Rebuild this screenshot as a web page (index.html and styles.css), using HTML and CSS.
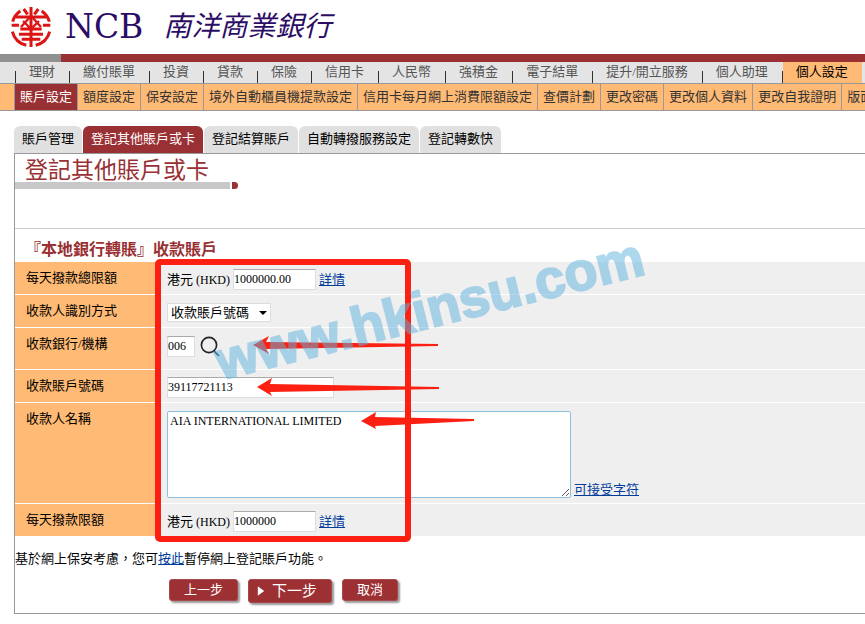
FILE: index.html
```html
<!DOCTYPE html>
<html lang="zh-Hant">
<head>
  <meta charset="UTF-8">
  <title>登記其他賬戶或卡</title>
  <link rel="stylesheet" href="styles.css">
</head>
<body>
  <header class="header">
    <svg class="logo" viewBox="0 0 120 120" fill="none" stroke="#dc1414" stroke-width="9">
      <path d="M60 0V120"/>
      <path d="M38 6L50 22M82 6L70 22"/>
      <path d="M28 12A57 57 0 0 0 5 44M92 12A57 57 0 0 1 115 44"/>
      <path d="M14 30H106"/>
      <path d="M2 55H24M96 55H118"/>
      <path d="M55 32L30 60M65 32L90 60M36 42L56 62M84 42L64 62" stroke-width="7"/>
      <path d="M28 66H92M24 82H96M32 97H88"/>
      <path d="M4 74A57 57 0 0 0 46 115M116 74A57 57 0 0 1 74 115"/>
    </svg>
    <span class="brand">NCB</span>
    <span class="brand-zh">南洋商業銀行</span>
  </header>
  <div class="stripe"></div>

  <nav class="menu">
    <a href="#">理財</a>
    <a href="#">繳付賬單</a>
    <a href="#">投資</a>
    <a href="#">貸款</a>
    <a href="#">保險</a>
    <a href="#">信用卡</a>
    <a href="#">人民幣</a>
    <a href="#">強積金</a>
    <a href="#">電子結單</a>
    <a href="#">提升/開立服務</a>
    <a href="#">個人助理</a>
    <a href="#" class="active">個人設定</a>
  </nav>

  <nav class="submenu">
    <a href="#" class="active">賬戶設定</a>
    <a href="#">額度設定</a>
    <a href="#">保安設定</a>
    <a href="#">境外自動櫃員機提款設定</a>
    <a href="#">信用卡每月網上消費限額設定</a>
    <a href="#">查價計劃</a>
    <a href="#">更改密碼</a>
    <a href="#">更改個人資料</a>
    <a href="#">更改自我證明</a>
    <a href="#">版面設定</a>
  </nav>

  <nav class="tabs">
    <a href="#">賬戶管理</a>
    <a href="#" class="active">登記其他賬戶或卡</a>
    <a href="#">登記結算賬戶</a>
    <a href="#">自動轉撥服務設定</a>
    <a href="#">登記轉數快</a>
  </nav>

  <main class="panel">
    <div class="title">
      <h1>登記其他賬戶或卡</h1>
      <div class="title-line"><span class="bar"></span><span class="dot"></span></div>
    </div>

    <h2>『本地銀行轉賬』收款賬戶</h2>

    <form>
      <div class="fields">
        <div class="row">
          <label for="total">每天撥款總限額</label>
          <div class="field">港元 <span class="latin">(HKD)</span> <input id="total" class="amount" value="1000000.00"> <a href="#">詳情</a></div>
        </div>
        <div class="row">
          <label for="method">收款人識別方式</label>
          <div class="field">
            <div class="select">
              <select id="method"><option>收款賬戶號碼</option></select>
              <svg viewBox="0 0 8 4"><path d="M0 0H8L4 4Z"/></svg>
            </div>
          </div>
        </div>
        <div class="row tall">
          <label for="bank">收款銀行/機構</label>
          <div class="field">
            <input id="bank" class="code" value="006">
            <button type="button" class="search" aria-label="搜尋">
              <svg viewBox="0 0 20 20" fill="none" stroke="#222" stroke-width="1.6"><circle cx="9" cy="9" r="7.6"/><path d="M14 15l5 5"/></svg>
            </button>
          </div>
        </div>
        <div class="row">
          <label for="account">收款賬戶號碼</label>
          <div class="field"><input id="account" class="account" value="39117721113"></div>
        </div>
        <div class="row">
          <label for="payee">收款人名稱</label>
          <div class="field bottom">
            <textarea id="payee">AIA INTERNATIONAL LIMITED</textarea>
            <a href="#">可接受字符</a>
          </div>
        </div>
        <div class="row">
          <label for="limit">每天撥款限額</label>
          <div class="field">港元 <span class="latin">(HKD)</span> <input id="limit" class="amount" value="1000000"> <a href="#">詳情</a></div>
        </div>

        <svg class="marks" viewBox="0 0 650 310">
          <g fill="#fb2012">
            <path d="M238 107L254 98L251 104L423 106V108L251 111L254 116Z"/>
            <path d="M242 149L257 140L255 146L424 149V151L255 154L257 158Z"/>
            <path d="M346 183L361 174L360 179L459 181V183L360 188L361 191Z"/>
          </g>
          <rect x="143" y="24" width="250" height="277" rx="2" fill="none" stroke="#fb2012" stroke-width="6"/>
          <text class="watermark" x="206" y="142" transform="rotate(-14 206 142)">www.hkinsu.com</text>
        </svg>
      </div>

      <p class="note">基於網上保安考慮，您可<a href="#">按此</a>暫停網上登記賬戶功能。</p>

      <div class="buttons">
        <button type="button">上一步</button>
        <button type="submit" class="next"><svg viewBox="0 0 10 12"><path d="M1 0L9 6L1 12Z" fill="#fff"/></svg>下一步</button>
        <button type="button">取消</button>
      </div>
    </form>
  </main>
</body>
</html>
```

FILE: styles.css
```css
* { box-sizing: border-box; }
body { margin: 0; font-family: "Liberation Serif", "Noto Sans CJK TC", serif; font-size: 13px; line-height: 16px; color: #000; background: #fff; }
a { color: #003c9c; }
nav { display: flex; white-space: nowrap; overflow: hidden; }
nav a { flex: none; text-decoration: none; }

.header { display: flex; align-items: center; height: 54px; padding-left: 11px; color: #2b0d66; }
.logo { width: 40px; height: 40px; margin-right: 14px; overflow: visible; }
.brand { font-family: "DejaVu Serif", serif; font-size: 33px; line-height: 40px; margin-right: 20px; }
.brand-zh { font-size: 28px; line-height: 40px; font-style: italic; }
.stripe { height: 8px; background: linear-gradient(to right, #909090 61px, #993033 61px); }

.menu { height: 22px; padding-left: 15px; background: #e4e4e4; border-bottom: 1px solid #999; }
.menu a { position: relative; padding: 2px 14px 3px 13px; color: #555; border-left: 1px solid transparent; background-clip: padding-box; }
.menu a::before { content: ""; position: absolute; left: -1px; bottom: 0; width: 1px; height: 12px; background: #333; }
.menu a:not(:first-child) { padding-left: 13px; }
.menu a.active { background-color: #ffba75; color: #000; }

.submenu { height: 27px; padding-left: 14px; background: #ffba75; border-bottom: 1px solid #999; }
.submenu a { padding: 5px; color: #333; border-left: 1px solid #999; }
.submenu a.active { background: #993033; color: #fff; }

.tabs { gap: 1px; margin-top: 15px; padding-left: 14px; }
.tabs a { padding: 5px 8px 6px; color: #000; background: #e0e0e0; border-radius: 6px 6px 0 0; }
.tabs a.active { background: #993033; color: #fff; }

.panel { margin-left: 14px; padding-bottom: 10px; border: 1px solid #999; border-right: none; }
.title { height: 75px; border-bottom: 1px solid #ccc; }
h1 { margin: 0; padding: 6px 0 0 10px; font-size: 23px; line-height: 22px; font-weight: normal; color: #993033; }
.title-line { display: flex; gap: 2px; }
.bar { width: 215px; height: 7px; background: #c8c8c8; }
.dot { width: 6px; height: 7px; background: #993033; border-radius: 0 4px 4px 0; }
h2 { margin: 0; padding: 11px 0 2px 10px; font-size: 16px; line-height: 20px; color: #993033; }

.fields { position: relative; }
.row { display: grid; grid-template-columns: 143px 1fr; min-height: 33px; border-bottom: 1px solid #fff; }
.row.tall { min-height: 42px; }
.row label { padding: 8px 11px; background: #ffba75; }
.field { display: flex; align-items: center; gap: 3px; padding: 6px 0 3px 9px; background: #efefef; }
.tall .field { align-items: flex-start; padding-top: 8px; }
.field.bottom { align-items: flex-end; padding: 8px 0 5px 9px; }
.latin { font-size: 12px; }
input, textarea, select { font-family: inherit; color: #000; background: #fff; border: 1px solid #ddd; }
input, textarea { font-size: 12px; }
input { height: 21px; padding: 1px 0; border-top-color: #aaa; }
.select { display: grid; align-items: center; }
select { grid-area: 1 / 1; appearance: none; width: 104px; height: 19px; padding: 0 3px; font-size: 13px; }
.select svg { grid-area: 1 / 1; justify-self: end; width: 8px; height: 4px; margin-right: 4px; pointer-events: none; }
textarea { width: 404px; height: 87px; padding: 2px; border-color: #8fbfdc; border-radius: 2px; margin: 0; }
.amount { width: 83px; }
.code { width: 28px; }
.account { width: 167px; }
.search { margin-left: 2px; padding: 0; border: none; background: none; }
.search svg { display: block; width: 20px; height: 20px; }

.marks { position: absolute; left: 0; top: -24px; width: 650px; height: 310px; overflow: visible; pointer-events: none; }
.watermark { font-family: "Liberation Sans", sans-serif; font-size: 54px; font-weight: bold; fill: #60b2de; stroke: #60b2de; stroke-width: 2px; opacity: 0.5; }

.note { margin: 0; padding: 14px 0 12px; }
.buttons { display: flex; align-items: flex-start; gap: 10px; padding-left: 154px; }
.buttons button { height: 22px; padding: 0 14px; font-family: inherit; font-size: 13px; line-height: 20px; color: #fff; background: #9c3033; border: 1px solid #a8484a; border-radius: 3px; box-shadow: 2px 2px 2px #999; }
.buttons .next { display: flex; align-items: center; gap: 7px; height: 24px; padding: 0 14px 0 8px; font-size: 15px; }
.next svg { width: 8px; height: 10px; }
```
